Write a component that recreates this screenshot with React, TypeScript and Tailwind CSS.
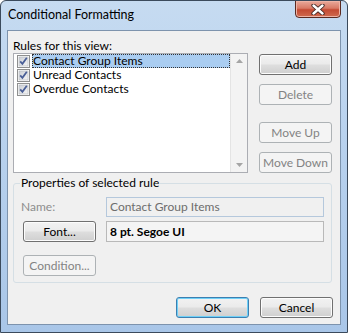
import type { ReactNode } from 'react';

const rules = [
  { label: 'Contact Group Items', selected: true },
  { label: 'Unread Contacts', selected: false },
  { label: 'Overdue Contacts', selected: false },
];

const CheckBox = () => (
  <svg width="13" height="13" viewBox="0 0 13 13" className="shrink-0">
    <defs>
      <linearGradient id="cbg" x1="0" y1="0" x2="1" y2="1">
        <stop offset="0" stopColor="#cbcfd5" />
        <stop offset="1" stopColor="#f6f6f6" />
      </linearGradient>
    </defs>
    <rect x="0.5" y="0.5" width="12" height="12" fill="#fff" stroke="#8e8f8f" />
    <rect x="2" y="2" width="9" height="9" fill="url(#cbg)" stroke="#b1b5bb" strokeWidth="0.6" />
    <path d="M3.2 6.4 L5.4 8.8 L9.8 2.8" fill="none" stroke="#4a5f97" strokeWidth="1.8" />
  </svg>
);

type BtnProps = { children: ReactNode; disabled?: boolean; primary?: boolean; className?: string };

const Btn = ({ children, disabled, primary, className = '' }: BtnProps) => {
  if (disabled) {
    return (
      <div
        className={`h-[21px] w-[73px] rounded-[3px] border border-[#adb2b5] bg-[#f4f4f4] text-[#838383] flex items-center justify-center ${className}`}
      >
        {children}
      </div>
    );
  }
  return (
    <div
      className={`h-[21px] w-[73px] rounded-[3px] border ${
        primary ? 'border-[#3c7fb1] shadow-[inset_0_0_0_1px_#6fd0f7]' : 'border-[#707070] shadow-[inset_0_0_0_1px_#fcfcfc]'
      } bg-[linear-gradient(to_bottom,#f2f2f2_0%,#ebebeb_45%,#dddddd_55%,#cfcfcf_100%)] text-black flex items-center justify-center ${className}`}
    >
      {children}
    </div>
  );
};

export default function App() {
  return (
    <div
      className="w-[348px] h-[333px] flex flex-col border border-[#3b4a5c] rounded-t-[6px] bg-[linear-gradient(to_bottom,#c6dbf1_0%,#b9d2ee_40%,#a9c6e8_100%)] text-[12px] leading-[14px] overflow-hidden"
      style={{ fontFamily: 'Lato, "Noto Sans", sans-serif' }}
    >
      {/* title bar */}
      <div className="h-[29px] shrink-0 flex items-start justify-between pl-[7px]">
        <span className="mt-[7px] text-[12.5px] text-black">Conditional Formatting</span>
        <div className="w-[46px] h-[18px] mr-[6px] -mt-px rounded-b-[4px] border border-[#5b2a21] bg-[linear-gradient(to_bottom,#e9a99b_0%,#d87a66_45%,#c44a33_55%,#cf6b4f_100%)] shadow-[inset_0_0_0_1px_#eeb3a5] flex items-center justify-center">
          <svg width="14" height="11" viewBox="0 0 14 11">
            <path d="M2.5 1.5 L11.5 9.5 M11.5 1.5 L2.5 9.5" stroke="#3d2320" strokeWidth="4.2" strokeLinecap="round" />
            <path d="M2.5 1.5 L11.5 9.5 M11.5 1.5 L2.5 9.5" stroke="#ffffff" strokeWidth="2.4" strokeLinecap="round" />
          </svg>
        </div>
      </div>

      {/* client area */}
      <div className="mx-[6px] mb-[7px] flex-1 flex flex-col bg-[#f0f0f0] border border-[#7d93ad] pl-[5px] pr-[6px]">
        <div className="mt-[8px] h-[14px] text-black">Rules for this view:</div>

        <div className="flex">
          {/* list */}
          <div className="w-[235px] h-[120px] border border-[#abadb3] bg-white flex">
            <div className="flex-1 flex flex-col pl-[3px]">
              {rules.map((r) => (
                <div key={r.label} className="h-[14px] flex items-center">
                  <CheckBox />
                  <div
                    className={`ml-[2px] flex-1 h-[14px] pl-[1px] flex items-center ${
                      r.selected ? 'bg-[#aacdf1] outline outline-1 outline-dotted outline-[#333] -outline-offset-1' : ''
                    }`}
                  >
                    {r.label}
                  </div>
                </div>
              ))}
            </div>
            {/* disabled scrollbar */}
            <div className="w-[17px] bg-[#f3f3f3] border-l border-[#e4e4e4] flex flex-col items-center justify-between py-[5px]">
              <svg width="7" height="4" viewBox="0 0 7 4">
                <path d="M0 4 L3.5 0 L7 4 Z" fill="#a5a5a5" />
              </svg>
              <svg width="7" height="4" viewBox="0 0 7 4">
                <path d="M0 0 L7 0 L3.5 4 Z" fill="#a5a5a5" />
              </svg>
            </div>
          </div>

          {/* side buttons */}
          <div className="ml-[11px] flex flex-col pt-px">
            <Btn>Add</Btn>
            <Btn disabled className="mt-[9px]">Delete</Btn>
            <Btn disabled className="mt-[17px]">Move Up</Btn>
            <Btn disabled className="mt-[9px]">Move Down</Btn>
          </div>
        </div>

        {/* group box */}
        <div className="relative mt-[10px] h-[100px] w-[319px] border border-[#d5dfe5] rounded-[3px] pt-[13px] pl-[9px] pr-[7px]">
          <span className="absolute left-[6px] -top-[8px] px-[1px] bg-[#f0f0f0] text-black">
            Properties of selected rule
          </span>
          <div className="grid grid-cols-[73px_1fr] gap-x-[10px] items-center">
            <span className="-ml-[2px] text-[#8d8d8d]">Name:</span>
            <div className="h-[20px] border border-[#b5c8dc] bg-[#f0f0f0] text-[#6d6d6d] pl-[3px] flex items-center">
              Contact Group Items
            </div>
          </div>
          <div className="mt-[4px] grid grid-cols-[73px_1fr] gap-x-[10px] items-center">
            <Btn>Font...</Btn>
            <div className="h-[21px] border border-[#b9b9b9] bg-[#f4f4f4] text-black font-bold pl-[3px] flex items-center">
              8 pt. Segoe UI
            </div>
          </div>
          <Btn disabled className="mt-[13px]">Condition...</Btn>
        </div>

        {/* footer */}
        <div className="mt-[14px] flex justify-end gap-[11px] pr-px">
          <Btn primary className="w-[72px]">OK</Btn>
          <Btn>Cancel</Btn>
        </div>
      </div>
    </div>
  );
}
